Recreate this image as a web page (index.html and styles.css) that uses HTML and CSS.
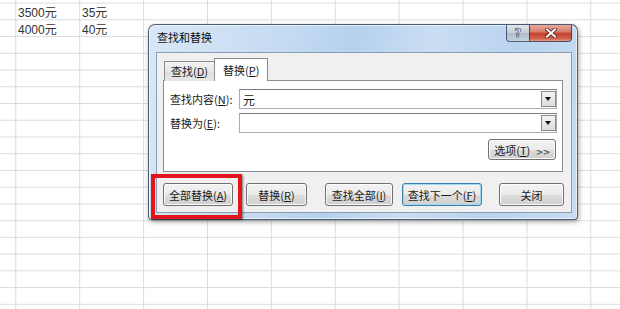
FILE: index.html
```html
<!DOCTYPE html>
<html lang="zh-CN">

<head>
    <meta charset="UTF-8">
    <title>查找和替换</title>
    <link rel="stylesheet" href="styles.css">
</head>

<body>
    <div class="sheet">
        <div class="sheet-row">
            <div class="cell">3500元</div>
            <div class="cell">35元</div>
        </div>
        <div class="sheet-row">
            <div class="cell">4000元</div>
            <div class="cell">40元</div>
        </div>
    </div>

    <div class="dialog">
        <div class="titlebar">
            <span class="title">查找和替换</span>
            <div class="caption-btns">
                <span class="cap-help">?</span>
                <span class="cap-close">
                    <svg width="12" height="10" viewBox="0 0 12 10">
                        <path d="M2 1.5 L10 8.5 M10 1.5 L2 8.5" stroke="#4a1f1a" stroke-width="3.6" stroke-linecap="square" />
                        <path d="M2 1.5 L10 8.5 M10 1.5 L2 8.5" stroke="#fff" stroke-width="2" stroke-linecap="square" />
                    </svg>
                </span>
            </div>
        </div>

        <div class="client">
            <div class="tabs">
                <div class="tab">查找(<u>D</u>)</div>
                <div class="tab active">替换(<u>P</u>)</div>
            </div>

            <div class="panel">
                <div class="field">
                    <label>查找内容(<u>N</u>):</label>
                    <div class="combo">元<span class="drop"></span></div>
                </div>
                <div class="field">
                    <label>替换为(<u>E</u>):</label>
                    <div class="combo"><span class="drop"></span></div>
                </div>
                <div class="options-row">
                    <button class="btn btn-options">选项(<u>T</u>) <span class="chev">&gt;&gt;</span></button>
                </div>
            </div>

            <div class="actions">
                <button class="btn btn-all">全部替换(<u>A</u>)</button>
                <button class="btn btn-replace">替换(<u>R</u>)</button>
                <button class="btn btn-findall">查找全部(<u>I</u>)</button>
                <button class="btn btn-next focused">查找下一个(<u>F</u>)</button>
                <button class="btn btn-close">关闭</button>
            </div>
        </div>
    </div>

    <div class="highlight"></div>
</body>

</html>
```

FILE: styles.css
```css
body {
    margin: 0;
    width: 620px;
    height: 309px;
    overflow: hidden;
    position: relative;
    font-family: "Noto Sans CJK SC", sans-serif;
    color: #1a1a1a;
}

.sheet {
    height: 309px;
    padding: 3px 0 0 16px;
    box-sizing: border-box;
    background-color: #fff;
    background-image:
        linear-gradient(to right, #dadcdd 1px, transparent 1px),
        linear-gradient(to bottom, #dadcdd 1px, transparent 1px);
    background-size: 63.9px 100%, 100% 16.74px;
    background-position: 15.3px 0, 0 2.6px;
}

.sheet-row {
    display: flex;
    height: 16.74px;
}

.cell {
    width: 64px;
    padding: 3px 0 0 2px;
    box-sizing: border-box;
    font-family: "Liberation Sans", "Noto Sans CJK SC", sans-serif;
    font-size: 12px;
    line-height: 14px;
    color: #333;
}

/* window */
.dialog {
    position: absolute;
    left: 148px;
    top: 24px;
    width: 430px;
    height: 196px;
    box-sizing: border-box;
    border: 1px solid rgba(45, 60, 80, 0.8);
    border-radius: 7px 7px 4px 4px;
    background: linear-gradient(100deg, #d8e7f6 0%, #c5dbf2 30%, #b5d1ee 45%, #cadef3 62%, #b9d3ef 80%, #c6dcf3 100%);
    box-shadow: 1px 2px 5px rgba(0, 0, 0, 0.35), inset 0 0 0 1px rgba(255, 255, 255, 0.6);
    font-size: 11px;
}

.titlebar {
    height: 27px;
    display: flex;
    justify-content: space-between;
    align-items: flex-start;
}

.title {
    padding: 4px 0 0 8px;
    line-height: 16px;
    color: #111;
}

.caption-btns {
    display: flex;
    margin-right: 5px;
}

.cap-help,
.cap-close {
    height: 17px;
    box-sizing: border-box;
    border: 1px solid rgba(40, 50, 70, 0.75);
    border-top: none;
    display: flex;
    align-items: center;
    justify-content: center;
}

.cap-help {
    width: 23px;
    border-right: none;
    border-radius: 0 0 0 4px;
    background: linear-gradient(#dfe6ee, #c3cdd8 50%, #aebccb 51%, #c4d1de);
    font-family: "DejaVu Sans", sans-serif;
    font-weight: bold;
    font-size: 12px;
    color: #e8edf3;
    -webkit-text-stroke: 0.6px #3d4a5b;
}

.cap-close {
    width: 43px;
    border-radius: 0 0 4px 0;
    background: linear-gradient(#e8a79c, #d77a6c 45%, #c2412f 50%, #d0604d 85%, #e0a08f);
}

.client {
    margin: 0 5px 0 7px;
    height: 161px;
    box-sizing: border-box;
    border: 1px solid #8d9db0;
    background: #f0f0f0;
    padding: 5px 0 0 6px;
}

/* tabs */
.tabs {
    display: flex;
    align-items: flex-end;
    height: 23px;
    padding-left: 1px;
    margin-bottom: -1px;
    position: relative;
    z-index: 1;
}

.tab {
    height: 20px;
    padding: 0 6px;
    box-sizing: border-box;
    border: 1px solid #898c95;
    border-bottom: none;
    background: linear-gradient(#f3f3f3, #e6e6e6 50%, #dedede 51%, #e8e8e8);
    line-height: 19px;
    white-space: nowrap;
}

.tab.active {
    height: 23px;
    padding: 0 8px;
    margin-left: -1px;
    background: #fff;
    line-height: 22px;
}

.panel {
    width: 400px;
    height: 92px;
    box-sizing: border-box;
    border: 1px solid #898c95;
    background: #fff;
    padding: 8px 5px 0 6px;
}

.field {
    display: flex;
    align-items: center;
    height: 20px;
    margin-bottom: 4px;
}

.field label {
    width: 69px;
    white-space: nowrap;
}

.combo {
    flex: 1;
    height: 20px;
    box-sizing: border-box;
    border: 1px solid #abadb3;
    border-top-color: #7a7e89;
    display: flex;
    align-items: center;
    justify-content: space-between;
    padding-left: 3px;
    font-size: 12px;
}

.drop {
    width: 15px;
    height: 16px;
    margin-left: auto;
    box-sizing: border-box;
    border: 1px solid #8a8a8a;
    background: linear-gradient(#f4f4f4, #dcdcdc);
    position: relative;
}

.drop::after {
    content: "";
    position: absolute;
    left: 3px;
    top: 5px;
    border-left: 3.5px solid transparent;
    border-right: 3.5px solid transparent;
    border-top: 4px solid #111;
}

.options-row {
    display: flex;
    justify-content: flex-end;
    margin-top: 6px;
    padding-right: 1px;
}

/* buttons */
.btn {
    height: 23px;
    box-sizing: border-box;
    border: 1px solid #707070;
    border-radius: 3px;
    background: linear-gradient(#f2f2f2 0%, #ebebeb 50%, #dddddd 51%, #cfcfcf 100%);
    box-shadow: inset 0 0 0 1px #fbfbfb;
    font-family: "Noto Sans CJK SC", sans-serif;
    font-size: 11px;
    color: #1a1a1a;
    padding: 0;
    text-align: center;
    white-space: nowrap;
}

.btn-options {
    width: 68px;
    height: 21px;
}

.chev {
    font-family: "DejaVu Sans", sans-serif;
    font-size: 9px;
    font-weight: bold;
    color: #555;
    letter-spacing: -0.5px;
    margin-left: 3px;
}

.actions {
    display: flex;
    margin-top: 11px;
}

.btn-all {
    width: 70px;
}

.btn-replace {
    width: 61px;
    margin-left: 13px;
}

.btn-findall {
    width: 68px;
    margin-left: 18px;
}

.btn-next {
    width: 80px;
    margin-left: 9px;
}

.btn-close {
    width: 65px;
    margin-left: 17px;
}

.btn.focused {
    border-color: #3c7fb1;
    box-shadow: inset 0 0 0 1px #9fd9f5;
}

/* red call-out around the replace-all button */
.highlight {
    position: absolute;
    left: 151px;
    top: 174px;
    width: 91px;
    height: 45px;
    box-sizing: border-box;
    border: 4px solid #e5141c;
    box-shadow: 1px 1px 2px rgba(0, 0, 0, 0.5);
}
```
